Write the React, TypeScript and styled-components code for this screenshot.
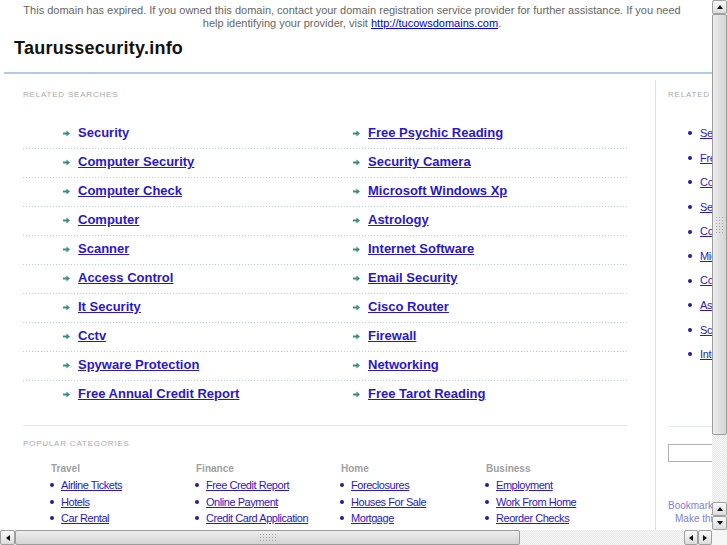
import React from "react";
import styled, { createGlobalStyle } from "styled-components";

const Global = createGlobalStyle`
  html, body { margin: 0; padding: 0; background: #fff; }
  body { font-family: "Liberation Sans", Arial, sans-serif; overflow: hidden; }
  * { box-sizing: border-box; }
`;

const LINK = "#2a16cc";

const Frame = styled.div`
  width: 727px;
  height: 545px;
  display: grid;
  grid-template-columns: 712px 15px;
  grid-template-rows: 530px 15px;
  overflow: hidden;
`;

const Viewport = styled.div`
  overflow: hidden;
  background: #fff;
`;

const Page = styled.div`
  width: 960px;
`;

const Banner = styled.div`
  width: 704px;
  padding: 4px 17px 0;
  font-size: 11px;
  line-height: 13px;
  color: #666;
  text-align: center;
  a { color: #0000ee; text-decoration: underline; }
`;

const Header = styled.div`
  margin-left: 4px;
  padding: 7px 10px 13px;
  border-bottom: 2px solid #b5c9e6;
`;

const Title = styled.h1`
  margin: 0;
  font-size: 18px;
  line-height: 22px;
  letter-spacing: 0.25px;
  font-weight: bold;
  color: #111;
`;

const Columns = styled.div`
  display: flex;
  margin: 6px 0 0 4px;
`;

const MainPanel = styled.div`
  width: 652px;
  min-height: 470px;
  padding: 10px 28px 0 19px;
  border-right: 1px solid #d8e2ef;
`;

const SectionLabel = styled.div`
  font-size: 8px;
  line-height: 10px;
  letter-spacing: 0.8px;
  color: #aaa;
  text-transform: uppercase;
`;

const SearchList = styled.div`
  margin-top: 20px;
`;

const SearchRow = styled.div`
  display: grid;
  grid-template-columns: 290px 1fr;
  padding: 5px 0 8px 40px;
  background: linear-gradient(to right, #b9cce6 1px, transparent 1px) left bottom / 3px 1px repeat-x;
  &:last-child { background: none; }
`;

const SearchItem = styled.div`
  display: flex;
  align-items: center;
  gap: 8px;
  line-height: 16px;
`;

const SearchLink = styled.a<{ $plain?: boolean }>`
  font-size: 13px;
  font-weight: bold;
  color: ${LINK};
  text-decoration: ${(p) => (p.$plain ? "none" : "underline")};
  cursor: pointer;
`;

const ArrowSvg = styled.svg`
  flex: none;
  display: block;
`;

const Divider = styled.div<{ $width?: number }>`
  border-top: 1px solid #dfe7f1;
  width: ${(p) => (p.$width ? `${p.$width}px` : "auto")};
`;

const Popular = styled.div`
  margin-top: 15px;
`;

const PopularLabel = styled(SectionLabel)`
  margin-top: 13px;
`;

const CatGrid = styled.div`
  display: grid;
  grid-template-columns: repeat(4, 145px);
  margin: 14px 0 0 27px;
`;

const CatHead = styled.div`
  font-size: 10px;
  line-height: 12px;
  font-weight: bold;
  color: #a0a0a0;
  padding-left: 1px;
`;

const CatList = styled.div`
  margin-top: 2px;
`;

const CatItem = styled.div`
  display: flex;
  align-items: center;
  gap: 7px;
  line-height: 16.5px;
  font-size: 11px;
  letter-spacing: -0.45px;
  a { color: ${LINK}; text-decoration: underline; }
`;

const Bullet = styled.span`
  flex: none;
  width: 4px;
  height: 4px;
  border-radius: 50%;
  background: #2a1a9a;
`;

const SidePanel = styled.div`
  width: 260px;
  padding: 10px 0 0 12px;
`;

const SideList = styled.div`
  margin-top: 21px;
  padding-left: 20px;
`;

const SideItem = styled.div`
  display: flex;
  align-items: center;
  gap: 8px;
  line-height: 24.56px;
  font-size: 11px;
  letter-spacing: -0.3px;
  white-space: nowrap;
  a { color: ${LINK}; text-decoration: underline; }
`;

const SideDivider = styled(Divider)`
  margin-top: 59px;
`;

const SearchBox = styled.input`
  display: block;
  margin-top: 17px;
  width: 150px;
  height: 18px;
  border: 1px solid #b0b0b0;
  padding: 0 3px;
`;

const Bookmark = styled.div`
  margin-top: 37px;
  font-size: 10px;
  line-height: 13px;
  color: #8080d6;
  white-space: nowrap;
`;

const BookmarkLine = styled.div<{ $indent?: number }>`
  padding-left: ${(p) => p.$indent ?? 0}px;
`;

/* Scrollbars */
const track = `repeating-conic-gradient(#e9e9e9 0 25%, #f7f7f7 0 50%) 0 0 / 2px 2px`;

const VScroll = styled.div`
  display: flex;
  flex-direction: column;
  background: ${track};
`;

const HScroll = styled.div`
  display: flex;
  background: ${track};
`;

const Corner = styled.div`
  background: #f5f5f5;
`;

const ScrollButton = styled.div<{ $w: number; $h: number }>`
  flex: none;
  width: ${(p) => p.$w}px;
  height: ${(p) => p.$h}px;
  border: 1px solid #a0a0a0;
  border-radius: 2px;
  background: linear-gradient(#fbfbfb, #dcdcdc);
  display: flex;
  align-items: center;
  justify-content: center;
`;

const Tri = styled.span<{ $dir: "up" | "down" | "left" | "right" }>`
  width: 0;
  height: 0;
  border: 3px solid transparent;
  ${(p) =>
    p.$dir === "up"
      ? "border-bottom: 4px solid #111; border-top-width: 0; margin-top: -1px;"
      : p.$dir === "down"
      ? "border-top: 4px solid #111; border-bottom-width: 0;"
      : p.$dir === "left"
      ? "border-right: 4px solid #111; border-left-width: 0;"
      : "border-left: 4px solid #111; border-right-width: 0;"}
`;

const Thumb = styled.div<{ $vertical?: boolean; $len: number }>`
  flex: none;
  ${(p) => (p.$vertical ? `height: ${p.$len}px; width: 15px;` : `width: ${p.$len}px; height: 15px;`)}
  border: 1px solid #9c9c9c;
  border-radius: 2px;
  background: ${(p) =>
    p.$vertical
      ? "linear-gradient(to right, #ededed, #d4d4d4)"
      : "linear-gradient(#ededed, #d4d4d4)"};
  display: flex;
  align-items: center;
  justify-content: center;
`;

const Grip = styled.div<{ $w: number; $h: number }>`
  width: ${(p) => p.$w}px;
  height: ${(p) => p.$h}px;
  background: radial-gradient(circle, #a2a2a2 0.8px, transparent 0.9px) 0 0 / 3px 3px;
`;

const Spacer = styled.div`
  flex: 1;
`;

const Arrow = () => (
  <ArrowSvg width="7" height="7" viewBox="0 0 7 7">
    <path d="M0 2.6h3.4V0.6L7 3.5 3.4 6.4V4.4H0z" fill="#3a8f80" />
  </ArrowSvg>
);

const searches: [string, string][] = [
  ["Security", "Free Psychic Reading"],
  ["Computer Security", "Security Camera"],
  ["Computer Check", "Microsoft Windows Xp"],
  ["Computer", "Astrology"],
  ["Scanner", "Internet Software"],
  ["Access Control", "Email Security"],
  ["It Security", "Cisco Router"],
  ["Cctv", "Firewall"],
  ["Spyware Protection", "Networking"],
  ["Free Annual Credit Report", "Free Tarot Reading"],
];

const categories = [
  { title: "Travel", items: ["Airline Tickets", "Hotels", "Car Rental"] },
  { title: "Finance", items: ["Free Credit Report", "Online Payment", "Credit Card Application"] },
  { title: "Home", items: ["Foreclosures", "Houses For Sale", "Mortgage"] },
  { title: "Business", items: ["Employment", "Work From Home", "Reorder Checks"] },
];

const sideLinks = [
  "Security",
  "Free Psychic Reading",
  "Computer Security",
  "Security Camera",
  "Computer Check",
  "Microsoft Windows Xp",
  "Computer",
  "Astrology",
  "Scanner",
  "Internet Software",
];

export default function App() {
  return (
    <>
      <Global />
      <Frame>
        <Viewport>
          <Page>
            <Banner>
              This domain has expired. If you owned this domain, contact your domain registration service
              provider for further assistance. If you need help identifying your provider, visit{" "}
              <a href="#">http://tucowsdomains.com</a>.
            </Banner>
            <Header>
              <Title>Taurussecurity.info</Title>
            </Header>
            <Columns>
              <MainPanel>
                <SectionLabel>Related Searches</SectionLabel>
                <SearchList>
                  {searches.map(([a, b], i) => (
                    <SearchRow key={a}>
                      <SearchItem>
                        <Arrow />
                        <SearchLink $plain={i === 0}>{a}</SearchLink>
                      </SearchItem>
                      <SearchItem>
                        <Arrow />
                        <SearchLink>{b}</SearchLink>
                      </SearchItem>
                    </SearchRow>
                  ))}
                </SearchList>
                <Popular>
                  <Divider />
                  <PopularLabel>Popular Categories</PopularLabel>
                  <CatGrid>
                    {categories.map((c) => (
                      <div key={c.title}>
                        <CatHead>{c.title}</CatHead>
                        <CatList>
                          {c.items.map((it) => (
                            <CatItem key={it}>
                              <Bullet />
                              <a href="#">{it}</a>
                            </CatItem>
                          ))}
                        </CatList>
                      </div>
                    ))}
                  </CatGrid>
                </Popular>
              </MainPanel>
              <SidePanel>
                <SectionLabel>Related Searches</SectionLabel>
                <SideList>
                  {sideLinks.map((s) => (
                    <SideItem key={s}>
                      <Bullet />
                      <a href="#">{s}</a>
                    </SideItem>
                  ))}
                </SideList>
                <SideDivider $width={220} />
                <SearchBox readOnly aria-label="search" />
                <Bookmark>
                  <BookmarkLine>Bookmark this page</BookmarkLine>
                  <BookmarkLine $indent={7}>Make this your homepage</BookmarkLine>
                </Bookmark>
              </SidePanel>
            </Columns>
          </Page>
        </Viewport>
        <VScroll>
          <ScrollButton $w={15} $h={14}>
            <Tri $dir="up" />
          </ScrollButton>
          <Thumb $vertical $len={421}>
            <Grip $w={9} $h={18} />
          </Thumb>
          <Spacer />
          <ScrollButton $w={15} $h={14}>
            <Tri $dir="up" />
          </ScrollButton>
          <ScrollButton $w={15} $h={14}>
            <Tri $dir="down" />
          </ScrollButton>
        </VScroll>
        <HScroll>
          <ScrollButton $w={15} $h={15}>
            <Tri $dir="left" />
          </ScrollButton>
          <Thumb $len={505}>
            <Grip $w={18} $h={9} />
          </Thumb>
          <Spacer />
          <ScrollButton $w={14} $h={15}>
            <Tri $dir="left" />
          </ScrollButton>
          <ScrollButton $w={14} $h={15}>
            <Tri $dir="right" />
          </ScrollButton>
        </HScroll>
        <Corner />
      </Frame>
    </>
  );
}
